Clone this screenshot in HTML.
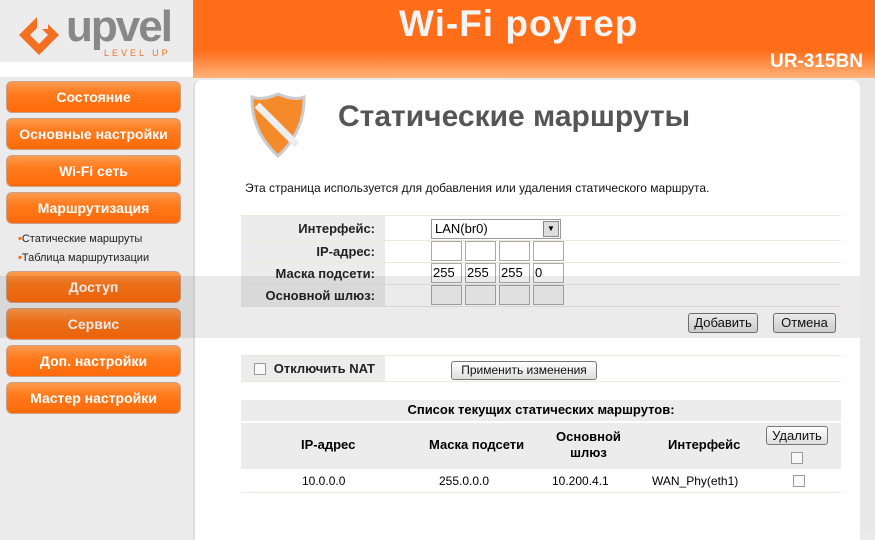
<!DOCTYPE html>
<html><head><meta charset="utf-8"><style>
*{margin:0;padding:0;box-sizing:border-box}
body{width:875px;height:530px;overflow:hidden;background:#ebebeb;font-family:"Liberation Sans","Noto Sans CJK SC",sans-serif;position:relative}
.abs{position:absolute}
#logo{left:0;top:0;width:193px;height:77px;background:#fff}
#logo .g{left:0;top:0;width:193px;height:62px;background:#ececec}
#hdr{left:193px;top:0;width:682px;height:78px;background:linear-gradient(#ff6d18 0,#ff6d18 50px,#ffb27a 78px)}
.btn{position:absolute;left:6px;width:175px;height:32px;border-radius:6px;border:1px solid #c8a088;background:linear-gradient(#ff9a4e,#ff7a1c 40%,#ff6a0a);color:#fff;font-weight:bold;font-size:14px;text-align:center;line-height:30px}
#panel{left:193px;top:80px;width:667px;height:460px;background:#fff;border-radius:8px 8px 0 0;border-left:2px solid #ddd}
.sub{position:absolute;left:18px;font-size:11px;color:#222}
.sub b{color:#ff6a0a}
.row{position:absolute;left:241px;width:600px;border-bottom:1px solid #f0e8d8}
.lab{position:absolute;left:0;width:144px;top:0;bottom:0;background:#ececec;text-align:right;padding-right:10px;font-size:13px;font-weight:bold;color:#222}
.ip{position:absolute;width:31px;height:20px;border:1px solid #aaa;background:#fff;font-size:13px;padding-left:1px;line-height:18px}
.b{position:absolute;border:1px solid #777;border-radius:3px;background:linear-gradient(#fff,#ddd);font-size:13px;text-align:center;color:#111;white-space:nowrap}
.cb{position:absolute;width:12px;height:12px;border:1px solid #999;background:#f8f8f8}
</style></head><body>
<div id="logo" class="abs"><div class="g abs"></div>
<svg class="abs" style="left:16px;top:12px" width="46" height="46" viewBox="0 0 46 46"><path d="M23 3 L43 23 L23 43 L3 23 Z M23 14 L14 23 L23 32 L32 23 Z" fill="#f37021" fill-rule="evenodd"/><rect x="21" y="2" width="11" height="15" fill="#ececec"/></svg>
<div class="abs" style="left:66px;top:2px;font-size:44px;color:#888;font-weight:bold;letter-spacing:-2px">upvel</div>
<div class="abs" style="left:104px;top:48px;font-size:9px;color:#f37021;letter-spacing:3px">LEVEL UP</div>
</div>
<div id="hdr" class="abs">
<div class="abs" style="left:206px;top:3px;font-size:37px;font-weight:bold;color:#f4f4f4;letter-spacing:1px">Wi-Fi роутер</div>
<div class="abs" style="left:577px;top:51px;font-size:19px;font-weight:bold;color:#fff">UR-315BN</div>
</div>
<div class="abs" style="left:860px;top:78px;width:15px;height:452px;background:#e8e8e8"></div>
<div class="btn" style="top:81px">Состояние</div>
<div class="btn" style="top:118px">Основные настройки</div>
<div class="btn" style="top:155px">Wi-Fi сеть</div>
<div class="btn" style="top:192px">Маршрутизация</div>
<div class="sub" style="top:233px"><b>•</b>Статические маршруты</div>
<div class="sub" style="top:252px"><b>•</b>Таблица маршрутизации</div>
<div class="btn" style="top:271px">Доступ</div>
<div class="btn" style="top:308px">Сервис</div>
<div class="btn" style="top:345px">Доп. настройки</div>
<div class="btn" style="top:382px">Мастер настройки</div>
<div id="panel" class="abs"></div>
<svg class="abs" style="left:249px;top:91px" width="58" height="68" viewBox="0 0 58 68"><path d="M29 3 Q45 10 55 6 Q56 40 29 65 Q2 40 3 6 Q13 10 29 3Z" fill="#f58a2a" stroke="#ccc" stroke-width="3"/><path d="M8 14 L48 54" stroke="#eee" stroke-width="7"/></svg>
<div class="abs" style="left:338px;top:100px;font-size:30px;font-weight:bold;color:#555">Статические маршруты</div>
<div class="abs" style="left:245px;top:181px;font-size:12px;color:#111">Эта страница используется для добавления или удаления статического маршрута.</div>
<div class="row" style="top:215px;height:26px;border-top:1px solid #f0e8d8"><div class="lab" style="line-height:25px">Интерфейс:</div>
<div class="abs" style="left:190px;top:3px;width:130px;height:20px;border:1px solid #999;font-size:13px;padding-left:3px;line-height:18px;background:#fff">LAN(br0)<div class="abs" style="right:1px;top:1px;width:16px;height:16px;background:#ddd;border:1px solid #888;font-size:8px;text-align:center;line-height:14px">▼</div></div></div>
<div class="row" style="top:241px;height:22px"><div class="lab" style="line-height:21px">IP-адрес:</div>
<div class="ip" style="left:190px;top:0"></div><div class="ip" style="left:224px;top:0"></div><div class="ip" style="left:258px;top:0"></div><div class="ip" style="left:292px;top:0"></div></div>
<div class="row" style="top:263px;height:22px"><div class="lab" style="line-height:21px">Маска подсети:</div>
<div class="ip" style="left:190px;top:0">255</div><div class="ip" style="left:224px;top:0">255</div><div class="ip" style="left:258px;top:0">255</div><div class="ip" style="left:292px;top:0">0</div></div>
<div class="row" style="top:285px;height:22px"><div class="lab" style="line-height:21px">Основной шлюз:</div>
<div class="ip" style="left:190px;top:0;background:#f4f4f4"></div><div class="ip" style="left:224px;top:0;background:#f4f4f4"></div><div class="ip" style="left:258px;top:0;background:#f4f4f4"></div><div class="ip" style="left:292px;top:0;background:#f4f4f4"></div></div>
<div class="b" style="left:688px;top:313px;width:70px;height:20px;line-height:18px">Добавить</div>
<div class="b" style="left:773px;top:313px;width:63px;height:20px;line-height:18px">Отмена</div>
<div class="abs" style="left:0;top:276px;width:860px;height:62px;background:rgba(0,0,0,0.08)"></div>
<div class="row" style="top:355px;height:27px;border-top:1px solid #f0e8d8"><div class="lab" style="line-height:26px"><span class="cb" style="position:relative;display:inline-block;top:2px;margin-right:8px"></span>Отключить NAT</div>
<div class="b" style="left:210px;top:5px;width:146px;height:19px;line-height:17px;font-size:12px">Применить изменения</div></div>
<div class="abs" style="left:241px;top:400px;width:600px;height:21px;background:#ececec;font-size:13px;font-weight:bold;text-align:center;line-height:20px">Список текущих статических маршрутов:</div>
<div class="abs" style="left:241px;top:423px;width:600px;height:46px;background:#ececec;font-size:13px;font-weight:bold">
<div class="abs" style="left:60px;top:14px">IP-адрес</div>
<div class="abs" style="left:188px;top:14px">Маска подсети</div>
<div class="abs" style="left:315px;top:6px;text-align:center;line-height:16px">Основной<br>шлюз</div>
<div class="abs" style="left:427px;top:14px">Интерфейс</div>
<div class="b" style="left:525px;top:3px;width:62px;height:19px;line-height:17px;font-weight:normal">Удалить</div>
<div class="cb" style="left:550px;top:29px"></div></div>
<div class="abs" style="left:241px;top:470px;width:600px;height:23px;border-bottom:1px solid #f0e8d8;font-size:12px;line-height:22px">
<div class="abs" style="left:61px">10.0.0.0</div><div class="abs" style="left:198px">255.0.0.0</div><div class="abs" style="left:311px">10.200.4.1</div><div class="abs" style="left:411px">WAN_Phy(eth1)</div><div class="cb" style="left:552px;top:5px"></div></div>
</body></html>
